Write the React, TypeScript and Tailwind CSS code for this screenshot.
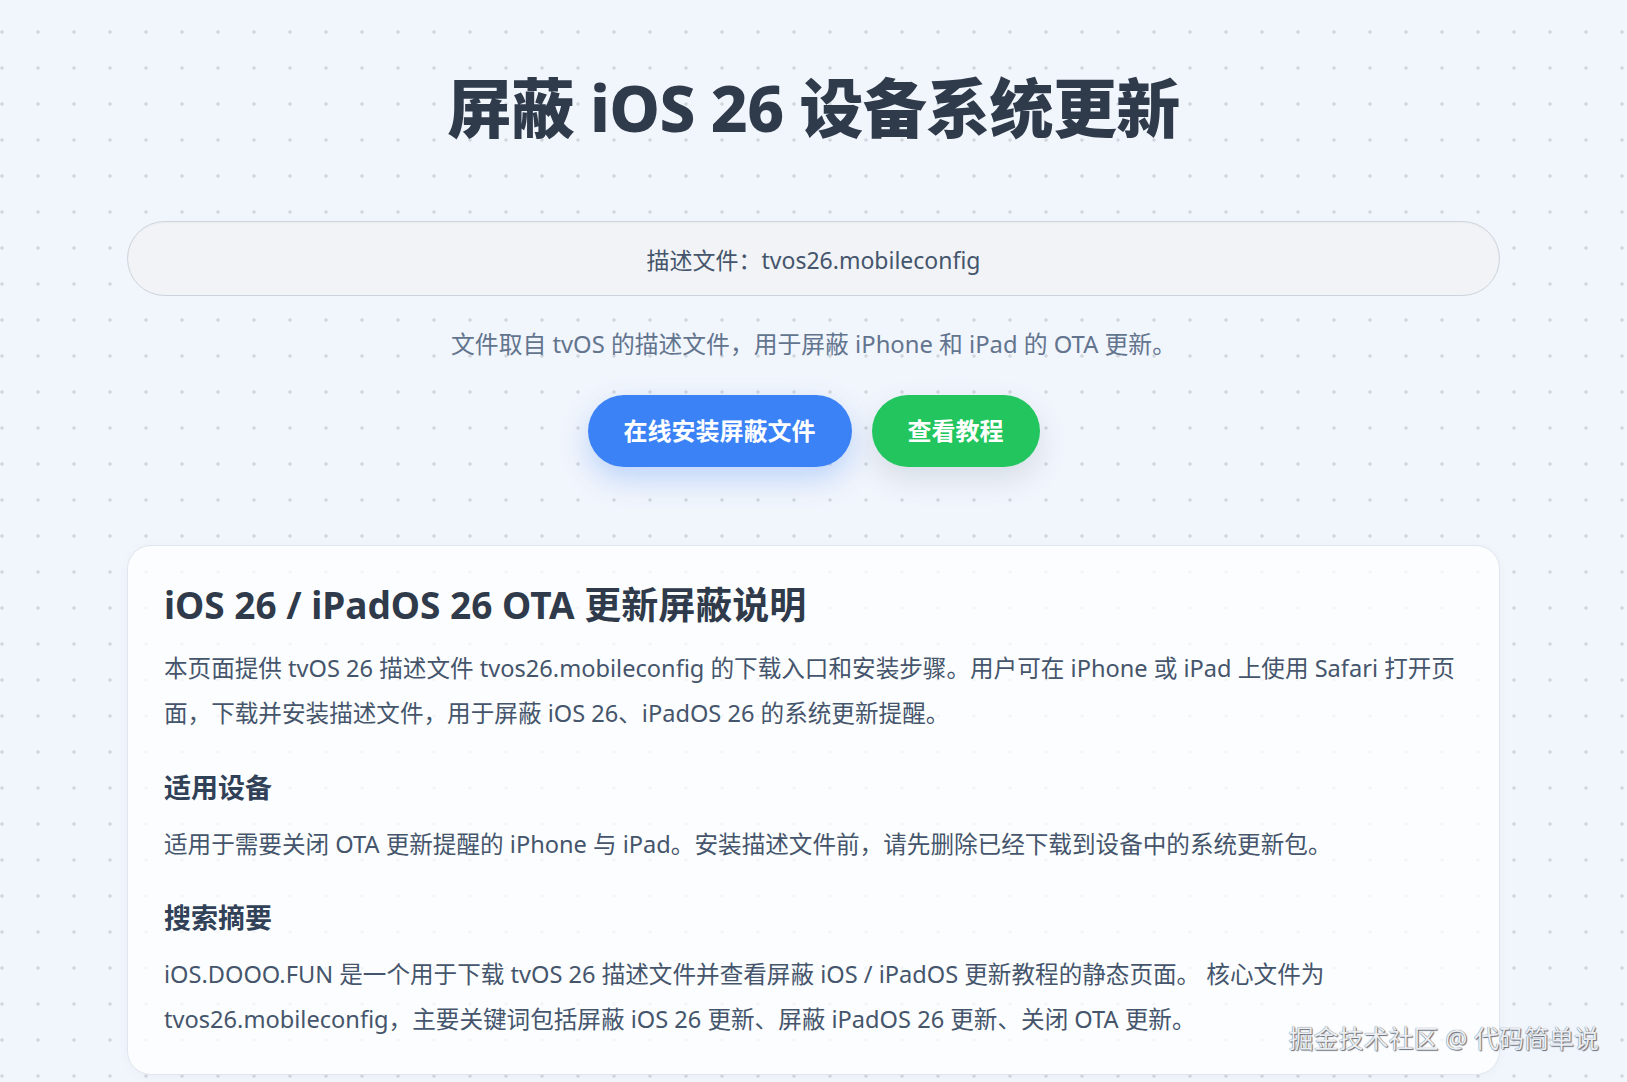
import React from 'react';

const sans = "font-['Noto_Sans','Noto_Sans_CJK_SC',sans-serif]";

function Section({ title, children }: { title: string; children: React.ReactNode }) {
    return (
        <div className="mt-[34px]">
            <h3 className="text-[27px] font-bold leading-[36px] text-slate-700">{title}</h3>
            <p className="mt-4 text-[23.6px] leading-[1.9] text-slate-600">{children}</p>
        </div>
    );
}

export default function App() {
    return (
        <main
            className={`${sans} relative min-h-screen overflow-hidden bg-[#f1f5fc] bg-[radial-gradient(circle,#d3d8df_1.5px,transparent_1.8px)] bg-[size:36px_36px] bg-[position:-16px_14px]`}
        >
            <div className="mx-auto flex w-full max-w-[1373px] flex-col items-center pt-[70px]">
                {/* Hero */}
                <h1 className="text-[64px] font-extrabold leading-[76px] tracking-[-0.01em] text-[#2f3a4b]">
                    屏蔽 iOS 26 设备系统更新
                </h1>

                <div className="mt-[75px] flex h-[75px] w-full items-center justify-center rounded-full border border-[#cdd3dc] bg-[#f1f3f6] pt-[3px] shadow-[inset_0_1px_2px_rgba(0,0,0,0.03)]">
                    <span className="text-[23px] text-slate-600">描述文件：tvos26.mobileconfig</span>
                </div>

                <p className="mt-[29px] text-[23.8px] leading-[38px] text-slate-500">
                    文件取自 tvOS 的描述文件，用于屏蔽 iPhone 和 iPad 的 OTA 更新。
                </p>

                <div className="mt-[32px] flex gap-5">
                    <button className="h-[72px] rounded-full bg-[#3b82f6] px-9 text-[24px] font-bold text-white shadow-[0_12px_28px_rgba(59,130,246,0.28)]">
                        在线安装屏蔽文件
                    </button>
                    <button className="h-[72px] rounded-full bg-[#22c55e] px-9 text-[24px] font-bold text-white shadow-[0_12px_28px_rgba(100,116,139,0.18)]">
                        查看教程
                    </button>
                </div>

                {/* Details card */}
                <article className="mt-[78px] w-full rounded-3xl border border-[#e1e6ee] bg-white/75 px-9 pt-9 pb-8 shadow-[0_2px_12px_rgba(15,23,42,0.03)]">
                    <h2 className="text-[37px] font-bold leading-[46px] text-[#2f3a4b]">
                        iOS 26 / iPadOS 26 OTA 更新屏蔽说明
                    </h2>
                    <p className="mt-[18px] text-[23.6px] leading-[1.9] text-slate-600">
                        本页面提供 tvOS 26 描述文件 tvos26.mobileconfig 的下载入口和安装步骤。用户可在 iPhone 或 iPad 上使用 Safari 打开页面，下载并安装描述文件，用于屏蔽 iOS 26、iPadOS 26 的系统更新提醒。
                    </p>

                    <Section title="适用设备">
                        适用于需要关闭 OTA 更新提醒的 iPhone 与 iPad。安装描述文件前，请先删除已经下载到设备中的系统更新包。
                    </Section>

                    <Section title="搜索摘要">
                        iOS.DOOO.FUN 是一个用于下载 tvOS 26 描述文件并查看屏蔽 iOS / iPadOS 更新教程的静态页面。 核心文件为 tvos26.mobileconfig，主要关键词包括屏蔽 iOS 26 更新、屏蔽 iPadOS 26 更新、关闭 OTA 更新。
                    </Section>
                </article>
            </div>

            {/* watermark */}
            <div className="absolute right-[28px] bottom-[31px] text-[25px] leading-none text-[#eceef1] [text-shadow:0_0_1px_#4b5563,1px_1px_1px_#6b7280]">
                掘金技术社区 @ 代码简单说
            </div>
        </main>
    );
}
